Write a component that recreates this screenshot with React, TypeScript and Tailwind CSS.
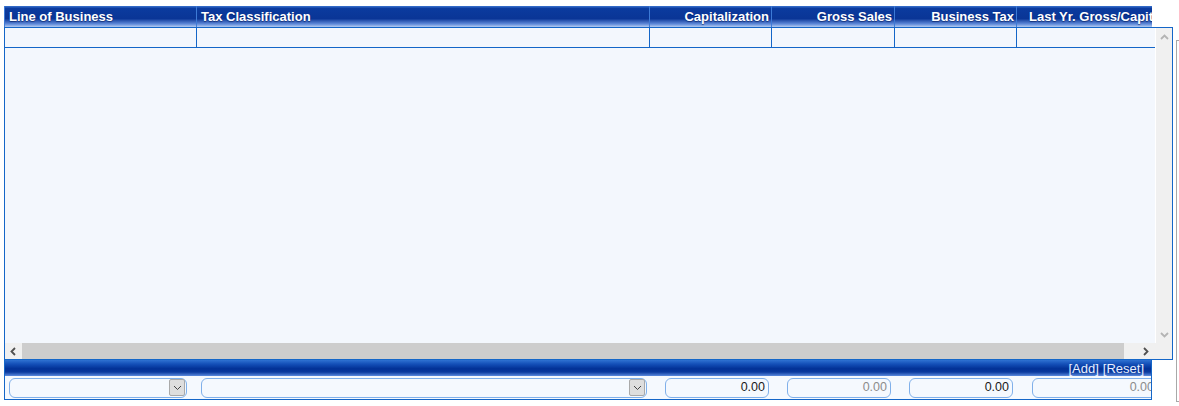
import React from 'react';

const headBg =
  'bg-[linear-gradient(to_bottom,#3b74d0_0%,#0b3b9e_12%,#0a3596_60%,#5d88d8_85%,#b3cbf0_100%)]';
const bandBg =
  'bg-[linear-gradient(to_bottom,#2f72d2_0%,#1450b8_25%,#023196_55%,#0a3a9e_75%,#5b8ade_100%)]';

const columns = [
  { label: 'Line of Business', width: 'w-[193px] border-l px-[4px]', right: false },
  { label: 'Tax Classification', width: 'w-[453px] px-[4px]', right: false },
  { label: 'Capitalization', width: 'w-[122px] px-[2px]', right: true },
  { label: 'Gross Sales', width: 'w-[123px] px-[2px]', right: true },
  { label: 'Business Tax', width: 'w-[122px] px-[2px]', right: true },
  { label: 'Last Yr. Gross/Capitalization', width: 'w-[200px] pl-[12px]', right: false },
];

const Chevron = ({ dir, color }: { dir: 'up' | 'down' | 'left' | 'right'; color: string }) => {
  const pts = {
    up: '1,6 4.5,2.5 8,6',
    down: '1,3 4.5,6.5 8,3',
    left: '6,1 2.5,4.5 6,8',
    right: '3,1 6.5,4.5 3,8',
  }[dir];
  return (
    <svg width="9" height="9" viewBox="0 0 9 9">
      <polyline points={pts} fill="none" stroke={color} strokeWidth="1.8" />
    </svg>
  );
};

const SelectBox = ({ width }: { width: string }) => (
  <div
    className={`${width} h-[20px] flex items-center justify-end rounded-[6px] border border-[#80b0ea] bg-[#f5f9fe] pr-[1px]`}
  >
    <div className="w-[16px] h-[17px] flex items-center justify-center rounded-[2px] border border-[#a9a9a9] bg-[#dedede]">
      <svg width="9" height="6" viewBox="0 0 9 6">
        <polyline points="1,1 4.5,4.5 8,1" fill="none" stroke="#444" strokeWidth="1" />
      </svg>
    </div>
  </div>
);

const AmountBox = ({ muted, className }: { muted?: boolean; className: string }) => (
  <div
    className={`${className} h-[20px] shrink-0 flex items-center justify-end rounded-[6px] border border-[#80b0ea] bg-[#f5f9fe] pr-[3px] text-[12.5px] ${
      muted ? 'text-[#8c8c8c]' : 'text-[#1a1a1a]'
    }`}
  >
    0.00
  </div>
);

const App = () => {
  return (
    <div className="flex items-start bg-white pl-[4px] pt-[6px] font-['Liberation_Sans',Arial,sans-serif] h-[406px] overflow-hidden">
      <div className="w-[1169px] shrink-0">
        {/* grid header */}
        <div className={`flex h-[21px] w-[1148px] overflow-hidden ${headBg}`}>
          {columns.map((c) => (
            <div
              key={c.label}
              className={`${c.width} shrink-0 h-full border-r border-[#3d7ad6] flex items-center pt-[1px] text-[13px] font-bold text-white whitespace-nowrap [text-shadow:0_1px_1px_rgba(0,20,80,0.6)] ${
                c.right ? 'justify-end' : 'justify-start'
              }`}
            >
              {c.label}
            </div>
          ))}
        </div>

        {/* grid body */}
        <div className="w-[1169px] h-[333px] border border-[#1466c8] bg-[#f3f7fd] flex flex-col">
          <div className="flex h-[315px]">
            <div className="flex-1">
              <div className="flex h-[20px] border-b border-[#1466c8]">
                <div className="w-[192px] border-r border-[#1466c8]" />
                <div className="w-[453px] border-r border-[#1466c8]" />
                <div className="w-[122px] border-r border-[#1466c8]" />
                <div className="w-[123px] border-r border-[#1466c8]" />
                <div className="w-[122px] border-r border-[#1466c8]" />
                <div className="flex-1" />
              </div>
            </div>
            <div className="w-[17px] bg-[#f0f0f0] border-l border-white flex flex-col items-center justify-between pt-[5px] pb-[4px]">
              <Chevron dir="up" color="#b4b4b4" />
              <Chevron dir="down" color="#b4b4b4" />
            </div>
          </div>
          <div className="flex h-[16px] bg-[#f0f0f0]">
            <div className="w-[17px] flex items-center justify-center">
              <Chevron dir="left" color="#505050" />
            </div>
            <div className="w-[1102px] bg-[#cdcdcd]" />
            <div className="flex-1 flex items-center justify-end pr-[5px]">
              <Chevron dir="right" color="#505050" />
            </div>
            <div className="w-[17px]" />
          </div>
        </div>

        {/* entry row */}
        <div className="w-[1148px] border-x border-b border-[#1466c8] overflow-hidden">
          <div className={`h-[16px] flex items-center justify-end pr-[7px] text-[13px] leading-none text-[#e6eeff] ${bandBg}`}>
            <span>[Add]</span>
            <span className="ml-[4px]">[Reset]</span>
          </div>
          <div className="h-[23px] flex items-center bg-[#f5f9fe] pl-[4px] whitespace-nowrap">
            <SelectBox width="w-[178px] shrink-0" />
            <SelectBox width="w-[446px] shrink-0 ml-[14px]" />
            <AmountBox className="w-[104px] ml-[18px]" />
            <AmountBox className="w-[104px] ml-[18px]" muted />
            <AmountBox className="w-[104px] ml-[18px]" />
            <AmountBox className="w-[126px] ml-[19px]" muted />
          </div>
        </div>
      </div>

      {/* neighbouring panel edge */}
      <div className="ml-[3px] mt-[34px] h-[362px] w-[20px] shrink-0 border-l border-y border-[#a8a8a8]" />
    </div>
  );
};

export default App;
